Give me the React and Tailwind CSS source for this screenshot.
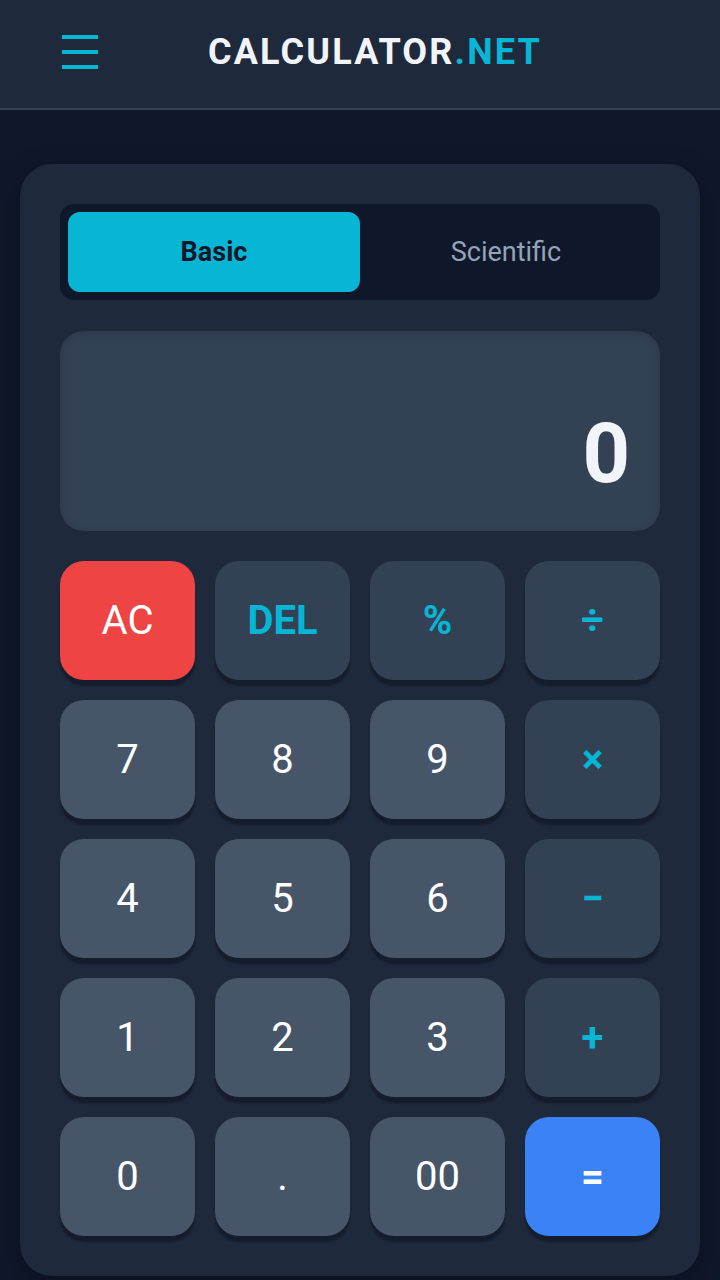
import { useState } from 'react';

const keys = [
  { label: 'AC', kind: 'clear' },
  { label: 'DEL', kind: 'op' },
  { label: '%', kind: 'op' },
  { label: '÷', kind: 'op' },
  { label: '7', kind: 'num' },
  { label: '8', kind: 'num' },
  { label: '9', kind: 'num' },
  { label: '×', kind: 'op' },
  { label: '4', kind: 'num' },
  { label: '5', kind: 'num' },
  { label: '6', kind: 'num' },
  { label: '−', kind: 'op' },
  { label: '1', kind: 'num' },
  { label: '2', kind: 'num' },
  { label: '3', kind: 'num' },
  { label: '+', kind: 'op' },
  { label: '0', kind: 'num' },
  { label: '.', kind: 'num' },
  { label: '00', kind: 'num' },
  { label: '=', kind: 'eq' },
];

const kindClass = {
  clear: 'bg-[#ef4444] text-white font-normal',
  op: 'bg-[#334155] text-[#06b6d4] font-bold',
  num: 'bg-[#475569] text-white font-normal',
  eq: 'bg-[#3b82f6] text-white font-bold',
};

function Key({ label, kind, onPress }) {
  return (
    <button
      onClick={() => onPress(label)}
      className={`h-[119px] rounded-[24px] flex items-center justify-center text-[40px] leading-none shadow-[0_6px_2px_rgba(12,18,32,0.5)] ${kindClass[kind]}`}
    >
      {label}
    </button>
  );
}

export default function App() {
  const [mode, setMode] = useState('basic');
  const [display, setDisplay] = useState('0');

  function press(label) {
    if (label === 'AC') return setDisplay('0');
    if (label === 'DEL') return setDisplay(d => (d.length > 1 ? d.slice(0, -1) : '0'));
    if (label === '=') return;
    setDisplay(d => (d === '0' && /\d/.test(label) ? label : d + label));
  }

  return (
    <div className="min-h-screen bg-[#0f172a] font-['Roboto',sans-serif]">
      {/* Header */}
      <header className="h-[110px] bg-[#1e293b] border-b-2 border-[#334155] flex items-center pl-[62px] pr-[68px] pb-[4px]">
        <button className="w-[36px] h-[34px] flex flex-col justify-between">
          <span className="block h-[4px] w-full bg-[#06b6d4]" />
          <span className="block h-[4px] w-full bg-[#06b6d4]" />
          <span className="block h-[4px] w-full bg-[#06b6d4]" />
        </button>
        <h1 className="flex-1 text-center text-[36px] font-bold tracking-[0.06em] text-[#f1f5f9]">
          CALCULATOR<span className="text-[#06b6d4]">.NET</span>
        </h1>
      </header>

      {/* Calculator card */}
      <main className="px-[20px] pt-[54px] pb-[4px]">
        <div className="bg-[#1e293b] rounded-[32px] p-[40px] shadow-[0_10px_30px_rgba(0,0,0,0.3)]">
          <div className="bg-[#0f172a] rounded-[14px] p-[8px] flex h-[96px]">
            <button
              onClick={() => setMode('basic')}
              className={`flex-1 rounded-[12px] text-[27px] ${mode === 'basic' ? 'bg-[#06b6d4] text-[#0f172a] font-bold' : 'text-[#94a3b8]'}`}
            >
              Basic
            </button>
            <button
              onClick={() => setMode('scientific')}
              className={`flex-1 rounded-[12px] text-[27px] ${mode === 'scientific' ? 'bg-[#06b6d4] text-[#0f172a] font-bold' : 'text-[#94a3b8]'}`}
            >
              Scientific
            </button>
          </div>

          <div className="mt-[31px] h-[200px] bg-[#334155] rounded-[24px] shadow-[inset_0_2px_8px_rgba(0,0,0,0.15)] flex items-end justify-end pl-[32px] pr-[30px] pb-[36px]">
            <span className="text-[83px] font-bold leading-none text-[#f1f5f9]">{display}</span>
          </div>

          <div className="mt-[30px] grid grid-cols-4 gap-[20px]">
            {keys.map(k => (
              <Key key={k.label} label={k.label} kind={k.kind} onPress={press} />
            ))}
          </div>
        </div>
      </main>
    </div>
  );
}
